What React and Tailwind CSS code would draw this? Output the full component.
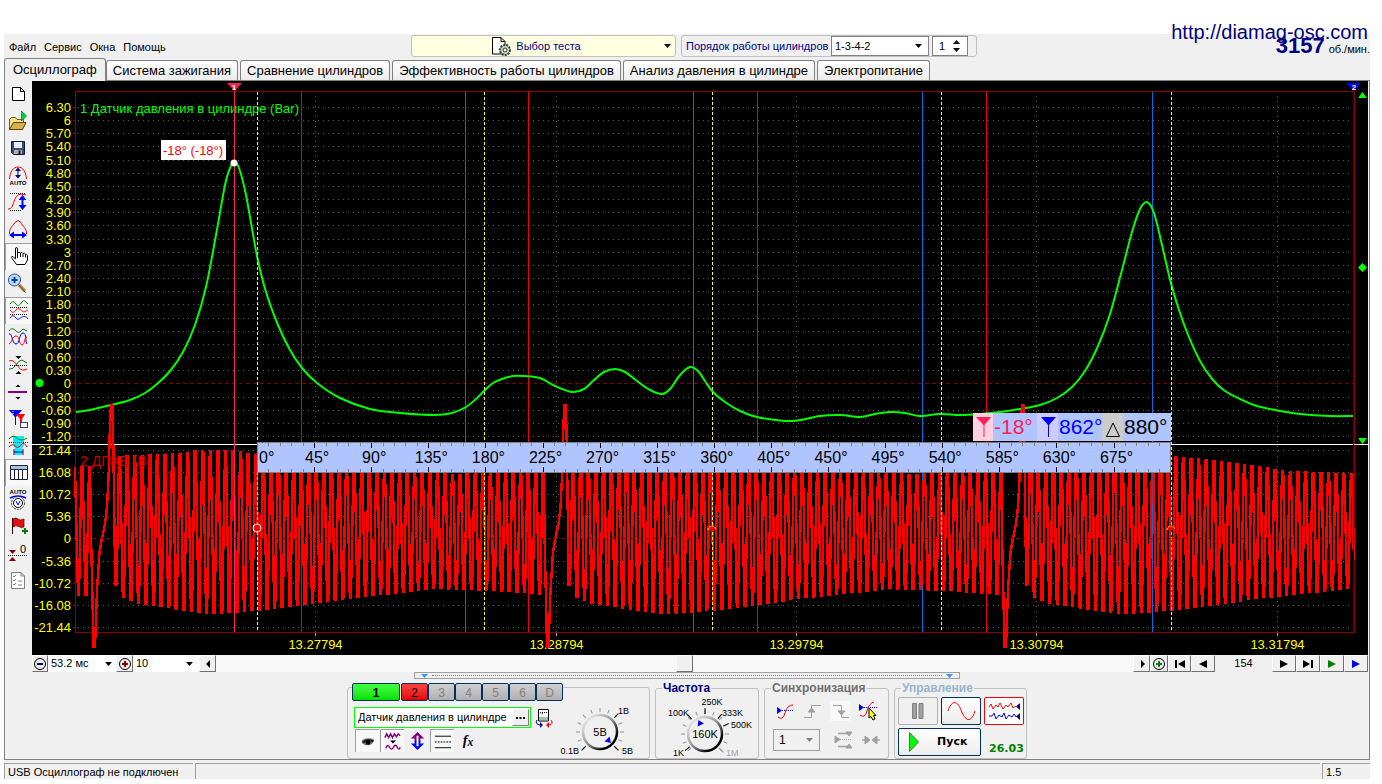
import { useState } from "react";

const TABS = [
  "Осциллограф",
  "Система зажигания",
  "Сравнение цилиндров",
  "Эффективность работы цилиндров",
  "Анализ давления в цилиндре",
  "Электропитание",
];

const ARIAL = "'Liberation Sans', Arial, sans-serif";

// Channel 1, cylinder pressure, as screen points
const PRESSURE = [
  [76, 412], [90, 410], [111, 405], [130, 400], [145, 393], [157, 384],
  [170, 371], [183, 352], [195, 325], [206, 287], [216, 235], [225, 185],
  [230, 168], [234, 162], [239, 168], [246, 195], [257, 256], [266, 292],
  [278, 325], [290, 350], [302, 368], [317, 383], [340, 398], [370, 409],
  [400, 413], [435, 415], [452, 413], [466, 407], [476, 399], [485, 390],
  [493, 383], [502, 379], [513, 376], [524, 376], [540, 378], [555, 386],
  [572, 392], [584, 389], [594, 380], [604, 372], [615, 369], [625, 372],
  [637, 381], [650, 390], [662, 394], [670, 389], [680, 375], [690, 367],
  [698, 371], [705, 381], [713, 392], [725, 402], [740, 411], [757, 417],
  [785, 421], [800, 420], [820, 416], [840, 415], [860, 417], [875, 414],
  [890, 412], [905, 413], [920, 416], [940, 414], [960, 415], [980, 414],
  [1000, 412], [1020, 409], [1040, 405], [1057, 398], [1072, 387],
  [1085, 371], [1098, 346], [1110, 314], [1122, 270], [1132, 232],
  [1140, 209], [1147, 202], [1154, 213], [1162, 245], [1172, 287],
  [1185, 327], [1200, 361], [1213, 380], [1225, 391], [1240, 399],
  [1257, 406], [1280, 411], [1300, 414], [1330, 416], [1353, 416],
];

// One turn of the crank sensor: envelope by offset from the missing tooth
const TOP = [[0, 457], [60, 454], [80, 451], [115, 451], [145, 457], [200, 463], [260, 472], [340, 475], [457, 467]];
const BOTTOM = [[0, 585], [8, 597], [20, 602], [64, 609], [90, 613], [120, 612], [175, 606], [230, 598], [320, 588], [380, 590], [457, 596]];

// The pulse left by the missing tooth, relative to its lowest point
const PULSE = [
  [-3, 535], [-1.5, 600], [-0.5, 647], [1, 647], [3, 590], [5.5, 552], [8, 538], [11, 524],
  [13, 507], [14.6, 476], [16, 423], [17, 405], [18.3, 405], [19.3, 443], [20.5, 530],
];

function lerp(table, x) {
  for (let i = 1; i < table.length; i++) {
    const [x0, y0] = table[i - 1];
    const [x1, y1] = table[i];
    if (x <= x1) return y0 + ((y1 - y0) * (x - x0)) / (x1 - x0);
  }
  return table[table.length - 1][1];
}

function smooth(points) {
  let d = `M${points[0][0]} ${points[0][1]}`;
  for (let i = 0; i < points.length - 1; i++) {
    const p0 = points[Math.max(i - 1, 0)];
    const p1 = points[i];
    const p2 = points[i + 1];
    const p3 = points[Math.min(i + 2, points.length - 1)];
    d += ` C${p1[0] + (p2[0] - p0[0]) / 6} ${p1[1] + (p2[1] - p0[1]) / 6} ${p2[0] - (p3[0] - p1[0]) / 6} ${p2[1] - (p3[1] - p1[1]) / 6} ${p2[0]} ${p2[1]}`;
  }
  return d;
}

function crankPath() {
  const gaps = [94, 547.5, 1005];
  const pts = [[75, 467], [78, 595], [79, 595], [81.5, 467], [82.5, 467], [85.5, 595], [86.5, 595], [89, 467], [90, 467]];
  gaps.forEach((g, n) => {
    PULSE.forEach(([x, y]) => pts.push([x + g, y]));
    const pitch = n < 2 ? (gaps[n + 1] - g - 29.7) / 56 : 7.64;
    for (let k = 0; k <= 56; k++) {
      const off = k * pitch;
      const x = g + 21.7 + off;
      const hi = lerp(TOP, off);
      const lo = lerp(BOTTOM, off);
      pts.push([x - 0.5, lo], [x + 0.6, lo], [x + 1.4, 560], [x + 2.5, 500], [x + 3.3, hi], [x + 4.4, hi], [x + 5.2, 500], [x + 6.3, 560]);
      if (k === 56) pts.splice(-2);
    }
  });
  return "M" + pts.filter((p) => p[0] <= 1354).map((p) => `${p[0].toFixed(1)} ${p[1].toFixed(1)}`).join("L");
}

const PRESSURE_LABELS = Array.from({ length: 26 }, (_, i) => {
  const v = 6.3 - i * 0.3;
  const whole = Math.abs(v - Math.round(v)) < 0.01;
  return { y: Math.round(107 + i * 13.16), text: whole ? String(Math.round(v) + 0) : v.toFixed(2) };
});
const CRANK_LABELS = ["21.44", "16.08", "10.72", "5.36", "0", "-5.36", "-10.72", "-16.08", "-21.44"].map((text, i) => ({
  y: Math.round(450 + i * 22.1),
  text,
}));
const TIMES = [
  [315.5, "13.27794"],
  [556.5, "13.28794"],
  [796.5, "13.29794"],
  [1036.5, "13.30794"],
  [1277.5, "13.31794"],
];
const RED_LINES = [301.5, 528.5, 757.5, 986.5];
const BLUE_LINES = [465.5, 693.5, 922.5, 1152.5];
const YELLOW_LINES = [257.5, 484.5, 712.5, 941.5, 1171.5];

function Chart() {
  return (
    <svg viewBox="32 81 1336 574" className="block w-full h-auto bg-black" fontFamily={ARIAL}>
      <g shapeRendering="crispEdges" fill="none">
        {[...PRESSURE_LABELS, ...CRANK_LABELS].map((l, i) => (
          <g key={i}>
            <path d={`M78 ${l.y + 0.5}H1353`} stroke={l.text === "0" ? "#800000" : "#5a5a5a"} strokeDasharray={l.text === "0" ? "4 3" : "1 4"} />
            <path d={`M73 ${l.y + 0.5}H76`} stroke="#800000" />
          </g>
        ))}
        {TIMES.map(([x]) => (
          <g key={x}>
            <path d={`M${x} 96V632`} stroke="#5a5a5a" strokeDasharray="1 4" />
            <path d={`M${x} 633V636`} stroke="#a0a0a0" />
          </g>
        ))}
        <path d="M75.500 91.500H1354.500V632.500H75.500Z" stroke="#900000" />
      </g>

      <g fill="#ffff00" textAnchor="end" fontSize="13">
        {[...PRESSURE_LABELS, ...CRANK_LABELS].map((l, i) => (
          <text key={i} x="71" y={l.y + 5}>{l.text}</text>
        ))}
      </g>
      <g fill="#ffff00" textAnchor="middle" fontSize="13">
        {TIMES.map(([x, t]) => (
          <text key={t} x={x} y="649">{t}</text>
        ))}
      </g>
      <text x="80" y="113" fontSize="13" fill="#00ff00">1 Датчик давления в цилиндре (Bar)</text>

      <g shapeRendering="crispEdges" fill="none">
        <path d="M32 444.500H1368" stroke="#fff" />
        {RED_LINES.map((x) => <path key={x} d={`M${x} 92V632`} stroke="#f00000" />)}
        {BLUE_LINES.map((x) => <path key={x} d={`M${x} 92V632`} stroke="#0070e0" />)}
      </g>
      <path d={smooth(PRESSURE)} fill="none" stroke="#00ff00" strokeWidth="2" />
      <path d={crankPath()} fill="none" stroke="#ff0000" strokeWidth="2.400" shapeRendering="crispEdges" />
      <text x="80" y="466" fontSize="14" fill="#c80000">2 ДПКВ (В)</text>
      <g shapeRendering="crispEdges" fill="none">
        <path d="M234.500 91V632" stroke="#ff2055" />
        <path d="M1152.500 472V632M693.500 472V632M465.500 472V632" stroke="#0070e0" strokeOpacity=".5" />
        <path d="M1353.500 91V632" stroke="#0000d0" />
        {YELLOW_LINES.map((x) => <path key={x} d={`M${x} 92V632`} stroke="#ffff40" strokeDasharray="3 2" />)}
        <path d="M78 538.500H1353" stroke="#800000" strokeDasharray="4 3" strokeOpacity=".7" />
      </g>

      {/* markers */}
      <path d="M227 83H242L234.500 91Z" fill="#ff2055" />
      <text x="234" y="90" fontSize="8" fontWeight="bold" fill="#fff" textAnchor="middle">1</text>
      <path d="M1346 83H1361L1353.500 91Z" fill="#0000ff" />
      <text x="1354" y="90" fontSize="8" fontWeight="bold" fill="#fff" textAnchor="middle">2</text>
      <path d="M1358 98H1367L1362.500 92ZM1358 438H1367L1362.500 444ZM1362.500 263L1367 267.500L1362.500 272L1358 267.500Z" fill="#00ff00" />
      <circle cx="39.500" cy="383" r="4" fill="#00ff00" />
      <circle cx="234" cy="163" r="3.500" fill="#fff" />
      <circle cx="257" cy="528" r="4" fill="#ff0000" stroke="#fff" />
      <path d="M708 530A4 4 0 1 1 716 530M1167 530A4 4 0 1 1 1175 530" fill="#ff0000" stroke="#ffff00" strokeDasharray="2 1" />
      <rect x="161" y="140" width="65" height="20" fill="#fff" />
      <text x="193" y="155" fontSize="13" fill="#ff0000" textAnchor="middle">-18° (-18°)</text>

      {/* angle ruler */}
      <rect x="257.500" y="442.500" width="913" height="30" fill="#b0c4ff" stroke="#808080" />
      <g shapeRendering="crispEdges">
        {Array.from({ length: 79 }, (_, i) => i + 1).map((i) => {
          const x = Math.floor(257.5 + i * 11.42) + 0.5;
          const major = i % 5 === 0;
          return <path key={i} d={`M${x} 443V${major ? 448 : 446}M${x} ${major ? 467 : 469}V472`} stroke={major ? "#000" : "#808080"} />;
        })}
      </g>
      <g fontSize="16" fill="#000">
        {Array.from({ length: 16 }, (_, i) => (
          <text key={i} x={i === 0 ? 259 : 260 + i * 57.1} y="463" textAnchor={i === 0 ? "start" : "middle"}>{i * 45}°</text>
        ))}
      </g>

      {/* cursor readout */}
      <rect x="973" y="413" width="198" height="28" fill="#b0c4ff" />
      <rect x="973" y="413" width="20" height="28" fill="#ffd0e0" />
      <rect x="1037" y="413" width="21" height="28" fill="#ccccff" />
      <rect x="1102" y="413" width="21" height="28" fill="#cccccc" />
      <path d="M976 417H991L984.500 425V437H983.500V425Z" fill="#ff2055" />
      <path d="M1041 417H1056L1049 425V437H1048V425Z" fill="#0000ff" />
      <path d="M1106.500 436.500H1119.500L1113 423Z" fill="none" stroke="#000" />
      <g fontSize="21">
        <text x="994" y="434" fill="#ff2055">-18°</text>
        <text x="1059" y="434" fill="#0000ff">862°</text>
        <text x="1124" y="434" fill="#000">880°</text>
      </g>
    </svg>
  );
}

const TOOLS = [
  {
    name: "Новый",
    icon: <path d="M8.500 6.500H16.500L20.500 10.500V19.500H8.500ZM16.500 6.500V10.500H20.500" fill="#fff" stroke="#000" />,
  },
  {
    name: "Открыть",
    icon: (
      <>
        <path d="M5.500 21.500V11.500L7.500 9.500H11.500L13 11.500H19.500V15" fill="#f5e08a" stroke="#7a5c10" />
        <path d="M5.500 21.500L9.500 14.500H22L18.500 21.500Z" fill="#d8b04a" stroke="#5a4208" />
        <path d="M17.500 3V13L22.500 8Z" fill="#00d040" stroke="#006020" strokeWidth=".6" />
      </>
    ),
  },
  {
    name: "Сохранить",
    icon: (
      <>
        <path d="M7.500 6.500H20.500V19.500H9.500L7.500 17.500Z" fill="#3b4a78" stroke="#101830" />
        <path d="M10 7H18V13H10Z" fill="#e8f0ff" />
        <path d="M10 15H18V19H10Z" fill="#b0b0b0" />
        <path d="M14.500 15.500H16.500V19H14.500Z" fill="#101830" />
      </>
    ),
  },
  {
    name: "Автомасштаб",
    icon: (
      <>
        <path d="M5.500 17C6 10 9 5 14 5S22 10 22.500 17" stroke="#ff0000" />
        <path d="M14 8V14" stroke="#000080" />
        <path d="M14 5.500L17 9H11ZM14 16.500L17 13H11Z" fill="#000080" />
        <text x="14" y="23" fontSize="6" textAnchor="middle" fill="#000" fontWeight="bold">AUTO</text>
      </>
    ),
  },
  {
    name: "Масштаб по вертикали",
    icon: (
      <>
        <path d="M6 4.500H22M6 21.500H17" stroke="#000" strokeDasharray="1 1" />
        <path d="M4 20C11 21 8 6 17 5L22 6" stroke="#ff0000" />
        <path d="M18.500 9V18" stroke="#0000ff" strokeWidth="2" />
        <path d="M18.500 6L22.500 11H14.500ZM18.500 21L22.500 16H14.500Z" fill="#0000ff" />
      </>
    ),
  },
  {
    name: "Масштаб по горизонтали",
    icon: (
      <>
        <path d="M5.500 18C5 12 9 10 11 6.500L14 4.500L17 6.500C18 10 23 12 22.500 18" stroke="#ff0000" />
        <path d="M7 19H21" stroke="#0000ff" strokeWidth="2" />
        <path d="M5 19L10 15.500V22.500ZM23 19L18 15.500V22.500Z" fill="#0000ff" />
      </>
    ),
  },
  {
    name: "Рука",
    pressed: true,
    icon: (
      <path d="M13.500 15V6Q13.500 4.500 12.500 4.500T11.500 6V16L9 13.500Q7.500 13 7.500 14.500L12.500 21.500H21L23.500 17V12.500Q22.500 11 21.500 12V11Q20.500 9.500 19 10.500Q18 8.500 16.500 10Q15.500 9 13.500 9.500M16.500 10V14M19 10.500V14M21.500 12V14.500" fill="#fff" stroke="#000" />
    ),
  },
  {
    name: "Лупа",
    icon: (
      <>
        <path d="M15 15L21 21" stroke="#c89040" strokeWidth="3.500" />
        <path d="M14 14L21.500 22.500" stroke="#404040" />
        <circle cx="10.500" cy="10" r="6" fill="#b8dcff" stroke="#305080" />
        <path d="M7.500 10H13.500M10.500 7V13" stroke="#104090" strokeWidth="2" />
      </>
    ),
  },
  {
    name: "Раздельно",
    pressed: true,
    icon: (
      <>
        <path d="M6 7C8 4 10 4 12 7S16 8 18 5S22 5 24 7" stroke="#008000" />
        <path d="M6 10.500H24M6 17.500H24" stroke="#000" strokeDasharray="1 1" />
        <path d="M6 13C8 16 10 16 12 13S16 12 18 14S22 14 24 13" stroke="#ff0000" />
        <path d="M6 21C8 18 10 18 12 21S16 21 18 20S22 19 24 22" stroke="#0000ff" />
      </>
    ),
  },
  {
    name: "Вместе",
    icon: (
      <>
        <path d="M5 7C7 4 9 4 12 7S17 7 19 5L23 7" stroke="#008000" />
        <path d="M5 10C8 8 8 20 12 20S15 9 19 9S21 18 23 20" stroke="#0000ff" />
        <path d="M5 20C8 19 8 12 12 12S15 21 18 21S20 13 23 13" stroke="#ff0000" />
      </>
    ),
  },
  {
    name: "Наложить",
    icon: (
      <>
        <path d="M6 14.500H24" stroke="#000" strokeDasharray="1 1" />
        <path d="M5 10Q9 8 13 14T20 19L23 18" stroke="#ff0000" />
        <path d="M5 18Q9 19 12 14T18 9L23 12" stroke="#008000" />
        <path d="M11.500 5H17.500L14.500 8ZM11.500 23H17.500L14.500 20Z" fill="#000" />
      </>
    ),
  },
  {
    name: "Уровень",
    icon: (
      <>
        <path d="M4 14H23" stroke="#800080" strokeWidth="2" />
        <path d="M11.500 9H16.500L14 6.500ZM11.500 19H16.500L14 21.500Z" fill="#000" />
      </>
    ),
  },
  {
    name: "Маркеры",
    icon: (
      <>
        <path d="M5 5H18L12 12V20H11V12Z" fill="#0000ff" />
        <path d="M12 9H21L18 14V19H16V14Z" fill="#ff0000" />
        <rect x="16.500" y="17.500" width="7" height="5" fill="#fff" stroke="#404080" />
        <path d="M9 6V9M18 20H22" stroke="#fff" strokeDasharray="1 1" />
      </>
    ),
  },
  {
    name: "Полоса",
    icon: (
      <>
        <path d="M9 4H20V13L18 16V23H11V16L9 13Z" fill="#00f0ff" />
        <path d="M5 7Q9 2 13 6T23 6" stroke="#008000" />
        <path d="M5 10.500H24" stroke="#000" strokeDasharray="1 1" />
        <path d="M5 15Q8 11 11 14T17 13T23 15" stroke="#ff0000" />
        <path d="M10 17V23M19 17V23M10 20H19" stroke="#000080" />
      </>
    ),
  },
  {
    name: "Таблица",
    pressed: true,
    icon: (
      <>
        <path d="M6.500 6.500H23.500V20.500H6.500Z" fill="#fff" stroke="#202030" />
        <path d="M7 7H23V10H7Z" fill="#a0c4f0" />
        <path d="M6 10.500H24M10.500 11V20M14.500 11V20M18.500 11V20" stroke="#202030" />
      </>
    ),
  },
  {
    name: "Авто напряжение",
    icon: (
      <>
        <text x="14" y="8" fontSize="6" textAnchor="middle" fill="#000" fontWeight="bold">AUTO</text>
        <path d="M6 12Q14 8 22 12" stroke="#0000ff" strokeWidth="1.500" />
        <circle cx="14" cy="17" r="6.500" stroke="#404040" strokeDasharray="2 1" />
        <circle cx="14" cy="17" r="4.500" fill="#fff" stroke="#000" />
        <path d="M12 15L14 19L16 15" stroke="#0000ff" />
      </>
    ),
  },
  {
    name: "Флаг",
    icon: (
      <>
        <path d="M8.500 5V21" stroke="#400000" />
        <path d="M9 6Q12 4 14 6T20 6V14Q17 15 14.500 13.500T9 14Z" fill="#e01010" stroke="#600000" strokeWidth=".7" />
        <path d="M18 18H24M21 15V21" stroke="#008000" strokeWidth="2" />
      </>
    ),
  },
  {
    name: "Ноль",
    icon: (
      <>
        <path d="M4 15.500H24" stroke="#000" strokeDasharray="1 1" />
        <path d="M5 10H12L8.500 14ZM5 21H12L8.500 17Z" fill="#800000" />
        <text x="16" y="13" fontSize="11" fill="#000">0</text>
      </>
    ),
  },
  {
    name: "Список",
    icon: (
      <>
        <path d="M7.500 5.500H17L20.500 9V21.500H7.500ZM17 5.500V9H20.500" fill="#fff" stroke="#808080" />
        <path d="M9 9L10 10L12 8M9 13L10 14L12 12M9 17L10 18L12 16M14 14H18M14 18H18" stroke="#808080" />
      </>
    ),
  },
];

function Toolbar() {
  return (
    <nav className="flex flex-col w-[27px] shrink-0">
      {TOOLS.map((t) => (
        <button
          key={t.name}
          aria-label={t.name}
          aria-pressed={!!t.pressed}
          className={`h-[27px] border-t border-l ${t.pressed ? "bg-[#f8f8f8] border-[#a0a0a0]" : "border-transparent"}`}
        >
          <svg viewBox="2 1 26 26" className="block w-full h-full" fill="none" fontFamily={ARIAL}>
            {t.icon}
          </svg>
        </button>
      ))}
    </nav>
  );
}

function Arrow({ className }) {
  return (
    <svg viewBox="0 0 7 4" className={`w-[7px] h-1 pointer-events-none ${className}`}>
      <path d="M0 0H7L3.500 4Z" fill="currentColor" />
    </svg>
  );
}

function Picker({ label, value, className, arrow = "right-1.5 text-black" }) {
  return (
    <span className={`relative flex items-center ${className}`}>
      <select aria-label={label} className="appearance-none w-full h-full pl-[3px] bg-transparent outline-none">
        <option>{value}</option>
      </select>
      <Arrow className={`absolute ${arrow}`} />
    </span>
  );
}

function Header({ active, onSelect }) {
  return (
    <header>
      <div className="flex items-start h-6 pt-px">
        <nav className="flex gap-2 w-[407px] pl-[5px] pt-1 shrink-0 leading-4">
          {["Файл", "Сервис", "Окна", "Помощь"].map((m) => (
            <button key={m}>{m}</button>
          ))}
        </nav>
        <button className="relative flex items-center justify-center gap-1 w-[265px] h-[22px] pr-3.5 rounded-[3px] border border-[#c0c0c0] bg-[#ffffe1] text-[#000080]">
          <svg viewBox="0 0 20 20" className="w-5 h-5" fill="none">
            <path d="M.5 1.500H9L13 5.500V18H.5Z" fill="#fff" stroke="#000" />
            <path d="M9 1.500V5.500H13" stroke="#000" />
            <circle cx="13" cy="14" r="5" fill="#c8d8c8" stroke="#303830" strokeWidth="2" strokeDasharray="2 1" />
            <circle cx="13" cy="14" r="2" fill="#fff" stroke="#303830" />
          </svg>
          <span>Выбор теста</span>
          <Arrow className="absolute right-1 text-black" />
        </button>
        <div className="flex items-center ml-[5px] h-[22px] pl-1 pr-2 rounded-[3px] border border-[#c0c0c0] text-[#000080]">
          <span className="w-[145px] whitespace-nowrap">Порядок работы цилиндров</span>
          <Picker label="Порядок работы цилиндров" value="1-3-4-2" className="w-[98px] h-5 bg-white border border-[#808080] text-black" />
          <div className="flex items-center ml-[3px] w-9 h-5 bg-white border border-[#808080] text-black">
            <input aria-label="Цилиндр" defaultValue="1" className="w-5 pl-1.5 outline-none" />
            <button aria-label="Изменить цилиндр">
              <svg viewBox="0 0 7 12" className="w-[7px] h-3">
                <path d="M0 4H7L3.500 0ZM0 8H7L3.500 12Z" />
              </svg>
            </button>
          </div>
        </div>
        <div className="relative ml-auto text-[#000080]">
          <a href="http://diamag-osc.com" className="absolute right-0.5 -top-[15px] text-[20px] leading-6 whitespace-nowrap">
            http://diamag-osc.com
          </a>
          <div className="flex items-baseline gap-1 pt-px whitespace-nowrap">
            <b className="text-[22px] leading-5">3157</b>
            <span className="text-black">об./мин.</span>
          </div>
        </div>
      </div>
      <div role="tablist" className="flex items-end gap-0.5 h-[23px] border-b border-[#808080] text-[13px] leading-4">
        {TABS.map((t, i) => (
          <button
            key={t}
            role="tab"
            aria-selected={i === active}
            onClick={() => onSelect(i)}
            className={`border border-b-0 border-[#808080] rounded-t-[3px] whitespace-nowrap ${
              i === active ? "h-[23px] px-2 -mb-px -mr-0.5 bg-[#f0f0f0]" : "h-5 px-1.5 bg-gradient-to-b from-white to-[#ececec]"
            }`}
          >
            {t}
          </button>
        ))}
      </div>
    </header>
  );
}

function RaisedButton({ label, className = "", children }) {
  return (
    <button
      aria-label={label}
      className={`flex items-center justify-center h-[17px] bg-[#f0f0f0] border border-r-[#707070] border-b-[#707070] border-t-white border-l-white ${className}`}
    >
      <svg viewBox="0 0 14 14" className="w-3.5 h-3.5" fill="none">
        {children}
      </svg>
    </button>
  );
}

function ScrollRow() {
  return (
    <div className="flex items-stretch h-[17px] bg-[#f8f8f8]">
      <RaisedButton label="Уменьшить" className="w-4">
        <circle cx="7" cy="7" r="5.500" stroke="#000" />
        <path d="M4 7H10" stroke="#000080" strokeWidth="2" />
      </RaisedButton>
      <Picker label="Развёртка" value="53.2 мс" className="w-[68px] bg-white" arrow="right-1 text-black" />
      <RaisedButton label="Увеличить" className="w-[17px]">
        <circle cx="7" cy="7" r="5.500" stroke="#000" />
        <path d="M4 7H10M7 4V10" stroke="#800000" strokeWidth="2" />
      </RaisedButton>
      <Picker label="Масштаб" value="10" className="w-[66px] bg-white" />
      <RaisedButton label="Влево" className="w-[17px]">
        <path d="M9 3V11L5 7Z" fill="#000" />
      </RaisedButton>
      <div className="flex flex-1 justify-center">
        <span className="w-[17px] ml-5 bg-[#f0f0f0] border border-[#707070] border-t-white border-l-white" />
      </div>
      <RaisedButton label="Вправо" className="w-[17px]">
        <path d="M6 3V11L10 7Z" fill="#000" />
      </RaisedButton>
      <RaisedButton label="Добавить кадр" className="w-[18px]">
        <circle cx="7" cy="7" r="5.500" stroke="#000" />
        <path d="M4 7H10M7 4V10" stroke="#008000" strokeWidth="2" />
      </RaisedButton>
      <RaisedButton label="Первый кадр" className="w-[23px]">
        <path d="M3 3V11" stroke="#000" strokeWidth="2" />
        <path d="M12 3V11L5 7Z" fill="#000" />
      </RaisedButton>
      <RaisedButton label="Предыдущий кадр" className="w-6">
        <path d="M11 3V11L3 7Z" fill="#000" />
      </RaisedButton>
      <output className="w-[57px] bg-[#f0f0f0] text-center">154</output>
      <RaisedButton label="Следующий кадр" className="w-6">
        <path d="M3 3V11L11 7Z" fill="#000" />
      </RaisedButton>
      <RaisedButton label="Последний кадр" className="w-6">
        <path d="M2 3V11L9 7Z" fill="#000" />
        <path d="M11 3V11" stroke="#000" strokeWidth="2" />
      </RaisedButton>
      <RaisedButton label="Воспроизвести" className="w-6">
        <path d="M3 3V11L11 7Z" fill="#008000" />
      </RaisedButton>
      <RaisedButton label="Воспроизвести всё" className="w-6">
        <path d="M3 3V11L11 7Z" fill="#0000ff" />
      </RaisedButton>
    </div>
  );
}

function Knob({ value, labels, pointer, id }) {
  const ticks = Array.from({ length: 13 }, (_, i) => -135 + i * 22.5);
  return (
    <svg viewBox="-50 -41 100 66" className="block w-[100px] h-[66px]" fontFamily={ARIAL}>
      <defs>
        <linearGradient id={id} x1="0" y1="0" x2="1" y2="1">
          <stop offset="0" stopColor="#ffffff" />
          <stop offset=".5" stopColor="#909090" />
          <stop offset=".8" stopColor="#000000" />
        </linearGradient>
      </defs>
      {ticks.map((a) => (
        <path key={a} d="M0 -20V-24" stroke="#909090" transform={`rotate(${a})`} />
      ))}
      {labels.map((l) => (
        <path key={l.text} d="M0 -20V-26" stroke={l.dim ? "#909090" : "#000"} transform={`rotate(${l.angle})`} />
      ))}
      <circle r="17" fill="#f0f0f0" stroke={`url(#${id})`} strokeWidth="2.500" />
      <path d="M-3.500 -10H3.500L0 -15.500Z" fill="#0000ff" transform={`rotate(${pointer})`} />
      <text y="4" fontSize="11" textAnchor="middle">{value}</text>
      <g fontSize="9">
        {labels.map((l) => (
          <text key={l.text} x={l.x} y={l.y} fill={l.dim ? "#a0a0a0" : "#000"} textAnchor={l.anchor}>{l.text}</text>
        ))}
      </g>
    </svg>
  );
}

const VIEW_TOOLS = [
  {
    name: "Видимость",
    on: true,
    icon: (
      <>
        <path d="M6 11Q11 7 19 10Q18 16 12 16T6 11Z" fill="#707070" />
        <path d="M7 13Q12 9 18 12" stroke="#202020" strokeWidth="2" />
        <circle cx="12.500" cy="13" r="2.500" fill="#000" />
      </>
    ),
  },
  {
    name: "Фильтр",
    on: true,
    icon: (
      <>
        <path d="M4 8L6 4L8 8L10 4L12 8L14 4L16 7L18 4L20 6M5 19Q7 14 9 18T13 18T17 18T20 18" stroke="#800080" strokeWidth="1.500" />
        <path d="M9.500 11H15.500L12.500 14Z" fill="#000" />
      </>
    ),
  },
  {
    name: "Инверсия",
    icon: (
      <>
        <path d="M12 2L19 9H15V12H9V9H5Z" fill="#800080" />
        <path d="M12 21L19 14H15V11H9V14H5Z" fill="#0000ff" />
        <path d="M12 6V17" stroke="#fff" strokeWidth="2" />
      </>
    ),
  },
  {
    name: "Линии",
    on: true,
    icon: (
      <>
        <path d="M4 6.500H21M4 18.500H21" stroke="#000" />
        <path d="M4 12.500H21" stroke="#000" strokeDasharray="2 1" />
      </>
    ),
  },
  {
    name: "Функция",
    icon: (
      <g fontFamily="'Liberation Serif', serif" fontWeight="bold" fontStyle="italic" fill="#000">
        <text x="7" y="16" fontSize="15">f</text>
        <text x="12" y="17" fontSize="12">x</text>
      </g>
    ),
  },
];

function Channels() {
  return (
    <div className="relative w-[303px] pt-1">
      <div className="absolute inset-x-0 top-2 bottom-0 rounded-[3px] border border-[#c0c0c0]" />
      <div className="relative flex pl-[5px] text-[12px]">
        <div className="w-[212px]">
          <div className="flex bg-[#f0f0f0]">
            <button className="w-12 h-[18px] mr-px border border-[#003060] bg-gradient-to-b from-[#40ff40] to-[#00e000] font-bold rounded-[2px]">1</button>
            <button className="w-[27px] h-[18px] border border-[#003060] bg-gradient-to-b from-[#ff4040] to-[#e00000] rounded-[2px]">2</button>
            {["3", "4", "5", "6", "D"].map((c) => (
              <button key={c} className="w-[27px] h-[18px] border border-[#003060] rounded-[2px] text-[#808080] bg-gradient-to-b from-[#d0d0d0] to-[#b0b0b0]">{c}</button>
            ))}
          </div>
          <div className="flex items-center mt-1.5 ml-0.5">
            <div className="flex items-center w-[177px] h-[21px] border border-[#00ff00] bg-white">
              <input aria-label="Датчик канала" defaultValue="Датчик давления в цилиндре" className="flex-1 min-w-0 pl-[3px] text-[11px] outline-none" />
              <button aria-label="Выбрать датчик" className="w-[17px] h-[17px] mr-px bg-[#f0f0f0] border border-[#808080] border-t-white border-l-white">
                <svg viewBox="0 0 15 15" className="block w-full h-full">
                  <path d="M3 7H5V9H3ZM6.500 7H8.500V9H6.500ZM10 7H12V9H10Z" />
                </svg>
              </button>
            </div>
            <button aria-label="Прибор" className="ml-1">
              <svg viewBox="0 0 18 20" className="block w-[18px] h-5" fill="none">
                <path d="M3.500 1.500H13.500V13H3.500Z" fill="#fff" stroke="#000" />
                <path d="M5 4.500H12M7 6L8 4" stroke="#000" strokeDasharray="1 1" />
                <path d="M4 9H13V12H4Z" fill="#a0c0a0" />
                <path d="M2 12Q-.5 16 5 17" stroke="#000080" />
                <path d="M5 14L8 17L5 20Z" fill="#000080" />
                <path d="M16 12Q19 16 14 17" stroke="#ff0000" />
                <path d="M14 14L11 17L14 20Z" fill="#ff0000" />
              </svg>
            </button>
          </div>
          <div className="flex gap-px mt-px ml-[3px]">
            {VIEW_TOOLS.map((t) => (
              <button key={t.name} aria-label={t.name} aria-pressed={!!t.on} className={`w-6 h-[23px] border-t border-l ${t.on ? "border-[#a0a0a0] bg-[#f8f8f8]" : "border-transparent"}`}>
                <svg viewBox="0 0 24 23" className="block w-full h-full" fill="none">{t.icon}</svg>
              </button>
            ))}
          </div>
        </div>
        <div className="pt-2 -ml-[13px]">
          <Knob
            id="volts"
            value="5В"
            pointer={135}
            labels={[
              { text: "0.1В", angle: -135, x: -21, y: 22, anchor: "end" },
              { text: "1В", angle: 45, x: 18, y: -18, anchor: "start" },
              { text: "5В", angle: 135, x: 22, y: 22, anchor: "start" },
            ]}
          />
        </div>
      </div>
    </div>
  );
}

function Group({ title, className, titleClass, children }) {
  return (
    <fieldset className={`rounded-[3px] border border-[#c0c0c0] ${className}`}>
      <legend className={`ml-1.5 px-px font-bold text-[12px] leading-[18px] ${titleClass}`}>{title}</legend>
      {children}
    </fieldset>
  );
}

function Controls() {
  return (
    <div className="flex justify-center items-stretch gap-[5px] h-20">
      <Channels />
      <Group title="Частота" titleClass="text-[#000080]" className="w-[104px]">
        <div className="-mt-1 -ml-px">
          <Knob
            id="rate"
            value="160K"
            pointer={-25}
            labels={[
              { text: "1K", angle: -130, x: -21, y: 22, anchor: "end" },
              { text: "100K", angle: -42, x: -16, y: -18, anchor: "end" },
              { text: "250K", angle: 0, x: 7, y: -29, anchor: "middle" },
              { text: "333K", angle: 40, x: 17, y: -18, anchor: "start" },
              { text: "500K", angle: 66, x: 26, y: -6, anchor: "start" },
              { text: "1M", angle: 135, x: 21, y: 22, anchor: "start", dim: true },
            ]}
          />
        </div>
      </Group>
      <Group title="Синхронизация" titleClass="text-[#707070]" className="w-[125px]">
        <div className="grid grid-cols-4 mx-1.5 mt-1 justify-items-center">
          <button aria-label="Синхронизация по уровню">
            <svg viewBox="0 0 20 20" className="w-5 h-5" fill="none">
              <path d="M2 6L7 9.500L2 13Z" fill="#0000ff" />
              <path d="M7 9.500H19" stroke="#0000ff" strokeDasharray="1 1" />
              <path d="M3 16Q8 20 10 12T18 4" stroke="#ff0000" />
            </svg>
          </button>
          <button aria-label="По фронту">
            <svg viewBox="0 0 20 20" className="w-5 h-5" fill="none" stroke="#a0a0a0">
              <path d="M1 16.500H8.500V4.500H18M8.500 7V12" />
              <path d="M8.500 7L12 11H5Z" fill="#a0a0a0" />
            </svg>
          </button>
          <button aria-label="По спаду" className="bg-[#f8f8f8]">
            <svg viewBox="0 0 20 20" className="w-5 h-5" fill="none" stroke="#a0a0a0">
              <path d="M3 4.500H11.500V16.500H19M11.500 5V14" />
              <path d="M11.500 14L15 10H8Z" fill="#a0a0a0" />
            </svg>
          </button>
          <button aria-label="Указать уровень">
            <svg viewBox="0 0 20 20" className="w-5 h-5" fill="none">
              <path d="M1 3L6 6.500L1 10Z" fill="#0000ff" />
              <path d="M6 6.500H19" stroke="#0000ff" strokeDasharray="1 1" />
              <path d="M2 14Q7 18 9 10T16 1" stroke="#ff0000" />
              <path d="M11 7V17L13 15.500L15 19L17 18L15.500 14.500H18Z" fill="#ffff00" stroke="#000" />
            </svg>
          </button>
        </div>
        <div className="flex items-center mt-2 ml-2">
          <Picker label="Канал синхронизации" value="1" className="w-[47px] h-[22px] pl-0.5 border border-[#a0a0a0] text-[12px]" arrow="right-1.5 text-[#808080]" />
          <svg viewBox="0 0 46 18" className="w-[46px] h-[18px] ml-3.5" fill="none" stroke="#a0a0a0">
            <path d="M1 5L6 8.500L1 12ZM12 1H18L15 5ZM12 17H18L15 13ZM31 5L36 9L31 13ZM43 5L38 9L43 13Z" fill="#a0a0a0" />
            <path d="M6 8.500H18" strokeDasharray="1 1" />
            <path d="M4 2.500H14M4 15.500H14M28 9H33M41 9H46" strokeWidth="1.500" />
          </svg>
        </div>
      </Group>
      <Group title="Управление" titleClass="text-[#99b4d1]" className="w-[133px]">
        <div className="flex gap-[3px] ml-[3px]">
          <button aria-label="Пауза" className="flex items-center justify-center w-10 h-7 border border-[#b0b0b0] rounded-[2px]">
            <svg viewBox="0 0 12 16" className="w-3 h-4">
              <path d="M.5 .5H4.500V15.500H.5ZM7 .5H11V15.500H7Z" fill="#a0a0a0" stroke="#808080" />
            </svg>
          </button>
          <button aria-label="Непрерывно" className="w-10 h-7 border border-[#003060] rounded-[2px] bg-gradient-to-b from-white to-[#ececec]">
            <svg viewBox="0 0 38 26" className="block w-full h-full" fill="none">
              <path d="M6 13C9 3 15 1 19 12S29 26 33 13" stroke="#ff0000" />
            </svg>
          </button>
          <button aria-label="Самописец" className="w-10 h-7 border border-[#ff0000] rounded-[2px] bg-white">
            <svg viewBox="0 0 38 26" className="block w-full h-full" fill="none">
              <path d="M4 9L6 6L8 11L11 7L13 9L15 5L18 11L21 7L23 9L26 5L28 10L31 8" stroke="#ff0000" />
              <path d="M4 18H7L9 15L11 21L14 17L17 19L19 15L21 21L24 17L27 19L29 16L31 19" stroke="#0000ff" />
              <path d="M35 5V12L31 8.500ZM35 15V22L31 18.500Z" fill="#000080" />
            </svg>
          </button>
        </div>
        <div className="flex items-end ml-[3px] mt-[3px] font-bold font-['DejaVu_Sans',sans-serif]">
          <button className="flex items-center w-[83px] h-7 border border-[#003060] rounded-[2px] bg-gradient-to-b from-white to-[#ececec]">
            <svg viewBox="0 0 10 20" className="w-2.5 h-5 ml-2.5">
              <path d="M.5 .5V19.500L9.500 10Z" fill="#00ff00" stroke="#408040" />
            </svg>
            <span className="ml-[18px]">Пуск</span>
          </button>
          <output className="ml-2 leading-[14px] text-[#008000]">26.03</output>
        </div>
      </Group>
    </div>
  );
}

function StatusBar() {
  const cell = "h-4 pl-[3px] border-t border-l border-[#a0a0a0] whitespace-nowrap leading-4";
  return (
    <footer className="flex gap-0.5 pt-[3px]">
      <span className={`w-[189px] ${cell}`}>USB Осциллограф не подключен</span>
      <span className={`flex-1 ${cell}`} />
      <span className={`w-12 ${cell}`}>1.5</span>
    </footer>
  );
}

export default function App() {
  const [active, setActive] = useState(0);
  return (
    <div className="min-h-screen bg-white pt-[34px] pl-1 pr-3 font-['Liberation_Sans',Arial,sans-serif] text-[11px] text-black">
      <div className="bg-[#f0f0f0]">
        <Header active={active} onSelect={setActive} />
        <main className="border-x border-b border-[#808080]">
          <div className="flex pr-px">
            <Toolbar />
            <div className="flex-1 min-w-0">
              <Chart />
              <ScrollRow />
            </div>
          </div>
          <div className="flex items-center justify-between w-[546px] h-[7px] mx-auto px-1.5 border border-[#a0a0a0] text-[#3399ff]">
            <Arrow className="" />
            <span className="flex-1 mx-1 border-t border-dotted border-[#3399ff]" />
            <Arrow className="" />
          </div>
          <Controls />
        </main>
        <StatusBar />
      </div>
    </div>
  );
}
